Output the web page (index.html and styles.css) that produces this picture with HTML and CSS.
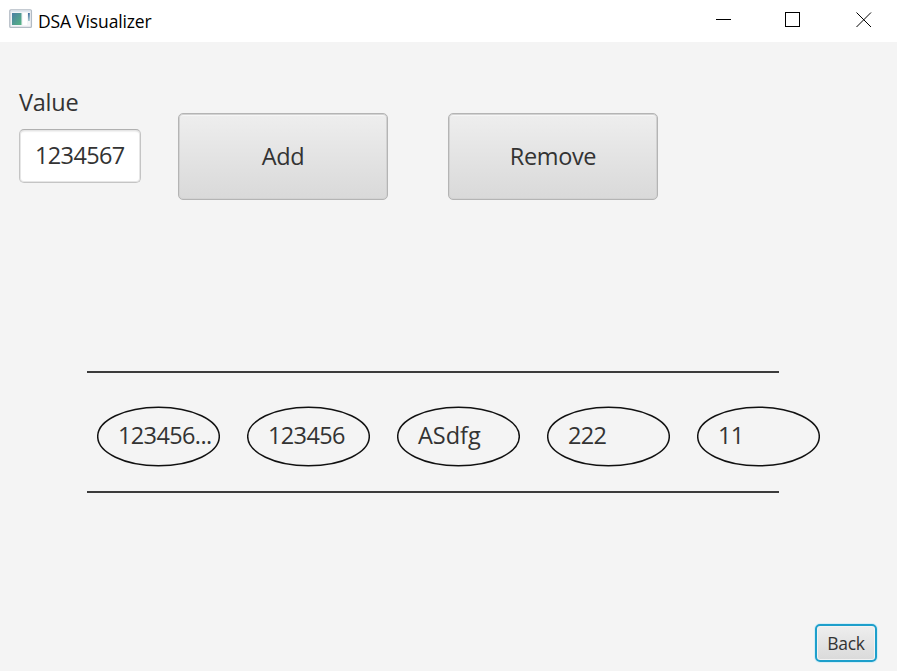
FILE: index.html
```html
<!DOCTYPE html>
<html lang="en">
<head>
<meta charset="utf-8">
<title>DSA Visualizer</title>
<link rel="stylesheet" href="styles.css">
</head>
<body>
<header class="titlebar">
  <svg class="app-icon" width="24" height="20" viewBox="0 0 24 20">
    <defs>
      <linearGradient id="pane" x1="0" y1="0" x2="1" y2="1"><stop offset="0" stop-color="#4b7fa5"/><stop offset="1" stop-color="#55b582"/></linearGradient>
      <linearGradient id="bar" x1="0" y1="0" x2="0" y2="1"><stop offset="0" stop-color="#3d6c9c"/><stop offset="1" stop-color="#a9cbd0"/></linearGradient>
    </defs>
    <rect x=".8" y=".8" width="21.600" height="17.600" rx="1" fill="#f4f5f8" stroke="#b2bbc4" stroke-width="1.3"/>
    <path d="M2 2.200h19.500" stroke="#dce6ee" stroke-width="1.4"/>
    <rect x="3" y="4" width="9.500" height="12" fill="url(#pane)"/>
    <rect x="14" y="4" width="4" height="12" fill="#fff"/>
    <rect x="19" y="4" width="1.800" height="8" fill="url(#bar)"/>
  </svg>
  <span class="title">DSA Visualizer</span>
  <svg class="controls" width="157" height="16" viewBox="0 0 157 16" fill="none" stroke="#000">
    <path d="M0 7.500h15M69.500 .5h14v14h-14z" shape-rendering="crispEdges"/>
    <path d="M140.500 .5l14.500 14.500M155 .5l-14.500 14.500"/>
  </svg>
</header>
<main class="content">
  <section class="form">
    <div class="field">
      <label class="label" for="value">Value</label>
      <input class="input" id="value" type="text" value="1234567">
    </div>
    <button class="button add">Add</button>
    <button class="button remove">Remove</button>
  </section>
  <section class="queue">
    <div class="node"><svg class="outline" viewBox="0 0 123 61"><ellipse cx="61.500" cy="30.500" rx="60.800" ry="29.300"/></svg><span class="digits">123456...</span></div>
    <div class="node"><svg class="outline" viewBox="0 0 123 61"><ellipse cx="61.500" cy="30.500" rx="60.800" ry="29.300"/></svg><span class="digits">123456</span></div>
    <div class="node"><svg class="outline" viewBox="0 0 123 61"><ellipse cx="61.500" cy="30.500" rx="60.800" ry="29.300"/></svg><span class="letters">ASdfg</span></div>
    <div class="node"><svg class="outline" viewBox="0 0 123 61"><ellipse cx="61.500" cy="30.500" rx="60.800" ry="29.300"/></svg><span class="digits">222</span></div>
    <div class="node"><svg class="outline" viewBox="0 0 123 61"><ellipse cx="61.500" cy="30.500" rx="60.800" ry="29.300"/></svg><span class="digits">11</span></div>
  </section>
  <footer class="footer"><button class="back">Back</button></footer>
</main>
</body>
</html>
```
FILE: styles.css
```css
* { box-sizing: border-box; }
body {
  margin: 0;
  width: 897px;
  height: 671px;
  overflow: hidden;
  display: flex;
  flex-direction: column;
  background: #f4f4f4;
  color: #333;
  font-family: "Open Sans", "Noto Sans", sans-serif;
  font-size: 23.5px;
}
button, input { font: inherit; color: inherit; margin: 0; }
.titlebar {
  height: 42px;
  flex: none;
  display: flex;
  align-items: flex-start;
  background: #fff;
  padding: 9px 24px 0 9px;
}
.title {
  margin: 0 auto 0 5px;
  color: #000;
  font-size: 17.5px;
  line-height: 24px;
  letter-spacing: -0.15px;
}
.controls { margin-top: 3px; }
.content { flex: 1; display: flex; flex-direction: column; }
.form { display: flex; padding: 45px 0 0 19px; height: 329px; align-items: flex-start; }
.field { width: 122px; display: flex; flex-direction: column; margin-right: 37px; }
.label { height: 42px; line-height: 31px; letter-spacing: -0.25px; }
.input {
  width: 122px;
  height: 54px;
  padding: 0 0 2px 15px;
  background: #fff;
  border: 1px solid #c4c4c4;
  border-top-color: #b0b0b0;
  border-radius: 5px;
  box-shadow: inset 0 0 0 1px #e6e6e6, inset 0 2px 2px -1px #ccc;
  outline: none;
  letter-spacing: -0.63px;
}
.button {
  width: 210px;
  height: 87px;
  margin-top: 26px;
  padding: 0 0 1px;
  border: 1px solid #b4b4b4;
  border-radius: 5px;
  background: linear-gradient(#eeeeee, #d9d9d9);
  box-shadow: inset 0 0 0 1px #d2d2d2, inset 0 2px 0 #f6f6f6;
  letter-spacing: -0.35px;
}
.remove { margin-left: 60px; }
.queue {
  width: 692px;
  height: 122px;
  flex: none;
  margin-left: 87px;
  padding: 33px 0 0 10px;
  display: flex;
  gap: 27px;
  border: solid #3b3b3b;
  border-width: 2px 0;
}
.node {
  position: relative;
  width: 123px;
  height: 61px;
  flex: none;
  padding-left: 21px;
  line-height: 58px;
  white-space: nowrap;
}
.outline {
  position: absolute;
  inset: 0;
  width: 123px;
  height: 61px;
  fill: none;
  stroke: #111;
  stroke-width: 1.5px;
}
.digits { letter-spacing: -0.63px; }
.letters { letter-spacing: 0; }
.footer { margin-top: auto; display: flex; justify-content: flex-end; padding: 0 20px 9px 0; }
.back {
  width: 62px;
  height: 38px;
  padding: 0;
  border: 2px solid #1d9fcb;
  border-radius: 5px;
  background: linear-gradient(#eee, #dadada);
  box-shadow: 0 0 0 1px #d5eef7, inset 0 0 0 1px #f3f3f3;
  font-size: 17.5px;
  letter-spacing: -0.3px;
}
```
